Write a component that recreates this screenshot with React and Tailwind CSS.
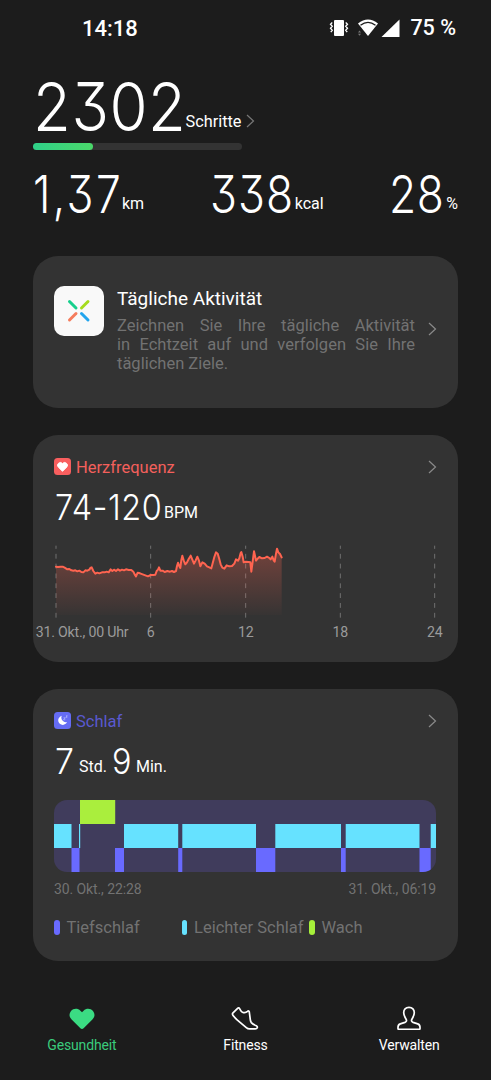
import React from "react";

const heartLine =
  "78,95 84,96 92,95 98,95 104,98 112,103 118,102 124,106 130,107 136,106 142,109 148,107 154,111 160,112 166,106 172,107 178,104 182,98 185,97 190,108 196,116 202,113 208,115 216,112 224,112 230,110 236,112 242,103 247,108 252,104 258,108 264,103 270,107 276,104 282,106 288,103 296,105 304,105 310,110 314,118 318,124 323,113 330,115 338,118 346,121 354,124 362,120 370,120 376,119 380,108 384,104 387,97 391,107 398,107 404,111 412,108 420,110 426,108 432,111 438,108 441,93 444,83 448,94 451,99 454,75 457,62 461,76 466,88 471,82 476,72 482,62 487,74 492,86 497,76 502,65 507,77 511,94 517,82 524,86 531,94 538,97 544,100 548,85 553,66 558,52 563,56 567,69 572,88 577,98 583,101 590,91 598,94 606,93 613,86 618,73 624,77 628,70 632,54 634,51 638,65 641,82 648,80 656,81 661,82 664,110 668,80 672,49 675,62 678,77 683,71 688,66 696,70 704,69 711,65 718,69 722,73 727,65 731,76 734,80 738,56 741,41 745,52 750,57 755,67";

const gridLines = [78, 362, 647, 931, 1214];

const chartLabels = [
  { x: 17, text: "31. Okt., 00 Uhr", anchor: "start" },
  { x: 362, text: "6", anchor: "middle" },
  { x: 647, text: "12", anchor: "middle" },
  { x: 931, text: "18", anchor: "middle" },
  { x: 1214, text: "24", anchor: "middle" },
];

// row 0 = awake, 1 = light, 2 = deep
const sleepPhases = [
  { from: 0, to: 17.5, row: 1 },
  { from: 17.5, to: 25.5, row: 2 },
  { from: 25, to: 26.2, row: 1 },
  { from: 26, to: 61.2, row: 0 },
  { from: 61, to: 70, row: 2 },
  { from: 70, to: 124.2, row: 1 },
  { from: 124.2, to: 128.3, row: 2 },
  { from: 128.3, to: 202, row: 1 },
  { from: 202, to: 221.3, row: 2 },
  { from: 221.3, to: 287, row: 1 },
  { from: 287, to: 291.7, row: 2 },
  { from: 291.7, to: 365.5, row: 1 },
  { from: 365.5, to: 376.7, row: 2 },
  { from: 376.7, to: 382, row: 1 },
];
const phaseColors = ["#aaee3d", "#66e2ff", "#696aff"];

const Chevron = ({ className }) => (
  <svg className={className} width="10" height="14" viewBox="0 0 10 14" fill="none">
    <path d="M1 1l6.5 6L1 13" stroke="currentColor" strokeWidth="1.2" />
  </svg>
);

// condensed digits, the wrapper takes the final width
const Digits = ({ width, className, children }) => (
  <span className={`block ${width}`}>
    <span
      className={`block w-max origin-left font-[Inter] [font-feature-settings:'cv09'] ${className}`}
    >
      {children}
    </span>
  </span>
);

const Stat = ({ value, unit, width, tracking }) => (
  <div className="flex items-end">
    <Digits
      width={width}
      className={`scale-x-[0.86] text-[51.5px] leading-[52px] font-[280] ${tracking}`}
    >
      {value}
    </Digits>
    <span className="mb-[8px] text-base leading-4">{unit}</span>
  </div>
);

const StatusBar = () => (
  <div className="flex h-14 items-center justify-between pl-[82px] pr-[35px] text-[21.5px] font-medium">
    <span className="text-[22px]">14:18</span>
    <div className="flex items-center">
      <svg className="mr-[8px]" width="20" height="18" viewBox="0 0 20 18">
        <rect x="5" y="1" width="10" height="16" rx="1" fill="white" />
        <path
          d="M3.3 3.5L1.5 5.2l1.8 2-1.8 2 1.8 2-1.5 2M16.7 3.5l1.8 1.7-1.8 2 1.8 2-1.8 2 1.5 2"
          stroke="white"
          strokeWidth="1.3"
          fill="none"
        />
      </svg>
      <svg className="mr-[2px]" width="22" height="18" viewBox="0 0 22 18">
        <path d="M1 4.5Q11-3.5 21 4.5L11 17z" fill="white" />
        <path d="M3.5 6.3Q11 .5 18.5 6.3" stroke="#1c1c1c" strokeWidth="1.3" fill="none" />
        <path d="M1 13.5l1.5-2 1.5 2zM1 14.8h3l-1.5 2z" fill="#777" />
      </svg>
      <svg className="mr-[10px]" width="19" height="18" viewBox="0 0 19 18">
        <path d="M.5 18L18.5 .5V18z" fill="white" />
      </svg>
      <span>75 %</span>
    </div>
  </div>
);

const ActivityCard = () => (
  <div className="mt-9 flex h-[152px] rounded-[25px] bg-[#333333] pt-[30px] pr-[20px] pl-[21px]">
    <div className="flex size-[50px] shrink-0 items-center justify-center rounded-[10px] bg-[#f9f9f9]">
      <svg width="24" height="24" viewBox="0 0 24 24" strokeWidth="3" strokeLinecap="round">
        <path d="M2.5 2.5l6.5 6.5" stroke="#16cf8c" />
        <path d="M21 2.5l-6.5 6.5" stroke="#a5dc1e" />
        <path d="M2.5 21l6.5-6.5" stroke="#f57c5c" />
        <path d="M21 21l-6.5-6.5" stroke="#22a5ee" />
      </svg>
    </div>
    <div className="ml-[13px] w-[298px] shrink-0">
      <h2 className="text-[19px] leading-[25px]">Tägliche Aktivität</h2>
      <p className="mt-[5px] text-justify text-[16.5px] leading-[19px] text-[#727272]">
        Zeichnen Sie Ihre tägliche Aktivität in&nbsp;Echtzeit auf und verfolgen Sie Ihre täglichen
        Ziele.
      </p>
    </div>
    <Chevron className="mt-[36px] ml-auto text-[#8a8a8a]" />
  </div>
);

const HeartCard = () => (
  <div className="mt-[27px] h-[227px] rounded-[25px] bg-[#333333] pt-[23px]">
    <div className="flex h-[17px] items-center pr-[20px] pl-[21px]">
      <svg width="17" height="17" viewBox="0 0 17 17">
        <rect width="17" height="17" rx="3.5" fill="#f95f5f" />
        <path
          d="M8.5 13.3L4.2 9A2.7 2.7 0 0 1 8.5 5.6 2.7 2.7 0 0 1 12.8 9z"
          fill="white"
          stroke="white"
          strokeLinejoin="round"
        />
      </svg>
      <span className="ml-[5px] pt-[3px] text-[16.5px] text-[#f4605c]">Herzfrequenz</span>
      <Chevron className="ml-auto text-[#8a8a8a]" />
    </div>
    <div className="mt-[14px] flex items-end pl-[22px]">
      <Digits
        width="w-[109px]"
        className="scale-x-[0.9] text-[36px] leading-9 font-[280] tracking-[0.6px]"
      >
        74-120
      </Digits>
      <span className="mb-[4.5px] text-base leading-4">BPM</span>
    </div>
    <svg className="mt-[10px]" width="425" height="110" viewBox="9 0 1275 330">
      <defs>
        <linearGradient id="heartFill" x1="0" y1="0" x2="0" y2="1">
          <stop offset="0" stopColor="#ff6450" stopOpacity="0.32" />
          <stop offset="1" stopColor="#ff6450" stopOpacity="0.02" />
        </linearGradient>
      </defs>
      {gridLines.map((x) => (
        <path
          key={x}
          d={`M${x} 32V252`}
          stroke="#707070"
          strokeWidth="3"
          strokeDasharray="14.5 15"
          strokeDashoffset="5"
        />
      ))}
      <polygon points={`78,240 ${heartLine} 755,240`} fill="url(#heartFill)" />
      <polyline
        points={heartLine}
        fill="none"
        stroke="#ff6450"
        strokeWidth="6"
        strokeLinejoin="round"
        strokeLinecap="round"
      />
      {chartLabels.map((label) => (
        <text
          key={label.text}
          x={label.x}
          y="305"
          textAnchor={label.anchor}
          fontSize="42.5"
          letterSpacing="-0.6"
          fill="#9b9b9b"
        >
          {label.text}
        </text>
      ))}
    </svg>
  </div>
);

const SleepCard = () => (
  <div className="mt-[27px] h-[272px] rounded-[25px] bg-[#333333] pt-[23px] pr-[20px] pl-[21px]">
    <div className="flex h-[17px] items-center">
      <svg width="17" height="17" viewBox="0 0 17 17">
        <rect width="17" height="17" rx="3.5" fill="#656cf4" />
        <path d="M7.8 3.8a4.6 4.6 0 1 0 5.3 6.2A4.5 4.5 0 0 1 7.8 3.8z" fill="white" />
        <path
          d="M9.5 5.8h1.8l-1.8 2h1.8M12 3.8h1.3l-1.3 1.5h1.3"
          stroke="#c9cbff"
          strokeWidth=".6"
          fill="none"
        />
      </svg>
      <span className="ml-[5px] pt-[3px] text-[16.5px] text-[#5a59cf]">Schlaf</span>
      <Chevron className="ml-auto text-[#8a8a8a]" />
    </div>
    <div className="mt-[14px] flex items-end pl-px">
      <Digits width="w-[24px]" className="scale-x-[0.94] text-[36px] leading-9 font-[280]">
        7
      </Digits>
      <span className="mb-[4.5px] w-[32.5px] text-base leading-4">Std.</span>
      <Digits width="w-[24.5px]" className="scale-x-[0.9] text-[36px] leading-9 font-[280]">
        9
      </Digits>
      <span className="mb-[4.5px] text-base leading-4">Min.</span>
    </div>
    <div className="mt-[21px] h-[71.5px] w-[382px] overflow-hidden rounded-[13px] bg-[#403c5c]">
      <svg width="382" height="72" viewBox="0 0 382 72">
        {sleepPhases.map((phase) => (
          <rect
            key={phase.from}
            x={phase.from}
            y={phase.row * 24}
            width={phase.to - phase.from}
            height="24"
            fill={phaseColors[phase.row]}
          />
        ))}
      </svg>
    </div>
    <div className="mt-[7px] flex w-[382px] justify-between text-[14px] leading-5 tracking-[-0.1px] text-[#727272]">
      <span>30. Okt., 22:28</span>
      <span>31. Okt., 06:19</span>
    </div>
    <div className="mt-[19px] flex items-center text-[16.5px] leading-5 text-[#727272]">
      <div className="flex w-[127.5px] items-center gap-[7px]">
        <span className="h-[15px] w-[5.5px] rounded-full bg-[#696aff]" />
        Tiefschlaf
      </div>
      <div className="flex w-[127.5px] items-center gap-[7px] whitespace-nowrap">
        <span className="h-[15px] w-[5.5px] shrink-0 rounded-full bg-[#66e2ff]" />
        Leichter Schlaf
      </div>
      <div className="flex items-center gap-[7px]">
        <span className="h-[15px] w-[5.5px] rounded-full bg-[#a6f03a]" />
        Wach
      </div>
    </div>
  </div>
);

const BottomNav = () => (
  <div className="mt-[45px] grid grid-cols-3 text-[14px] leading-5 tracking-[-0.15px]">
    <div className="flex flex-col items-center text-[#3acb7c]">
      <svg width="26" height="24" viewBox="0 0 26 24">
        <path
          d="M13 23c-.7 0-1.1-.3-1.6-.8L2.6 13.4A6.6 6.6 0 0 1 2 4.9C4.500 2.200 8.800 2.100 11.400 4.700L13 6.200l1.600-1.500c2.600-2.600 6.900-2.500 9.400.2a6.600 6.600 0 0 1-.6 8.500l-8.800 8.800c-.5.5-.9.8-1.600.8z"
          fill="#3bdc83"
        />
      </svg>
      <span className="mt-[5px]">Gesundheit</span>
    </div>
    <div className="flex flex-col items-center">
      <svg width="28" height="24" viewBox="0 0 28 24" fill="none">
        <path
          d="M6.6 2.4L2 6.9c-.7.7-.7 1.500-.1 2.300 1.300 1.700 2.600 3.300 4.200 4.700l9.200 7.700c1 .9 2 1.300 3.300 1.300h5.600c2.200 0 2.900-2.200 1.100-3.100-2-.9-3.800-1.800-5-3.200-.7-.9-.8-1.900-1-3l-1-7.600c-.2-1.100-1-1.400-1.800-.6-1.400 1.300-3.400 1.500-5.100.8C9.800 5.600 9.600 4.200 8.600 2.600c-.5-.8-1.300-.9-2-.2z"
          stroke="white"
          strokeWidth="1.7"
          strokeLinejoin="round"
        />
      </svg>
      <span className="mt-[5px]">Fitness</span>
    </div>
    <div className="flex flex-col items-center">
      <svg width="24" height="24" viewBox="0 0 24 24" fill="none">
        <path
          d="M12 1.300C8.600 1.300 6.700 3.500 6.700 6.800c0 2.500 1.100 4.200 2.300 6.200.9 1.500.6 2.700-1.100 3.400l-4.600 1.500C1.700 18.400 1 19.600 1 21.200V22.500c0 .5.300.8.800.8h20.400c.5 0 .8-.3.800-.8v-1.300c0-1.600-.7-2.800-2.300-3.300l-4.600-1.500c-1.700-.7-2-1.900-1.100-3.400 1.200-2 2.300-3.700 2.300-6.200C17.300 3.500 15.400 1.300 12 1.300z"
          stroke="white"
          strokeWidth="1.7"
        />
      </svg>
      <span className="mt-[5px]">Verwalten</span>
    </div>
  </div>
);

const App = () => {
  return (
    <div className="h-[1080px] w-[491px] overflow-hidden bg-[#1c1c1c] font-[Roboto,sans-serif] text-white">
      <StatusBar />
      <div className="px-[33px]">
        <div className="mt-[17px] flex h-[67px] items-end">
          <Digits
            width="w-[152.5px]"
            className="scale-x-[0.92] text-[67px] leading-none font-[320] tracking-[0.6px]"
          >
            2302
          </Digits>
          <span className="mb-[10.5px] text-[16.3px] leading-4">Schritte</span>
          <Chevron className="mb-[12px] ml-[5px] text-[#777777]" />
        </div>
        <div className="mt-[3px] h-[7px] w-[209px] rounded-full bg-[#333333]">
          <div className="h-full w-[60px] rounded-full bg-linear-to-r from-[#2ed088] to-[#4ad869]" />
        </div>
        <div className="mt-[18px] flex justify-between">
          <Stat value="1,37" unit="km" width="w-[89px]" tracking="tracking-[2.8px]" />
          <Stat value="338" unit="kcal" width="w-[85px]" tracking="tracking-[1.2px]" />
          <Stat value="28" unit="%" width="w-[57px]" tracking="tracking-[0.6px]" />
        </div>
        <ActivityCard />
        <HeartCard />
        <SleepCard />
      </div>
      <BottomNav />
    </div>
  );
};

export default App;
